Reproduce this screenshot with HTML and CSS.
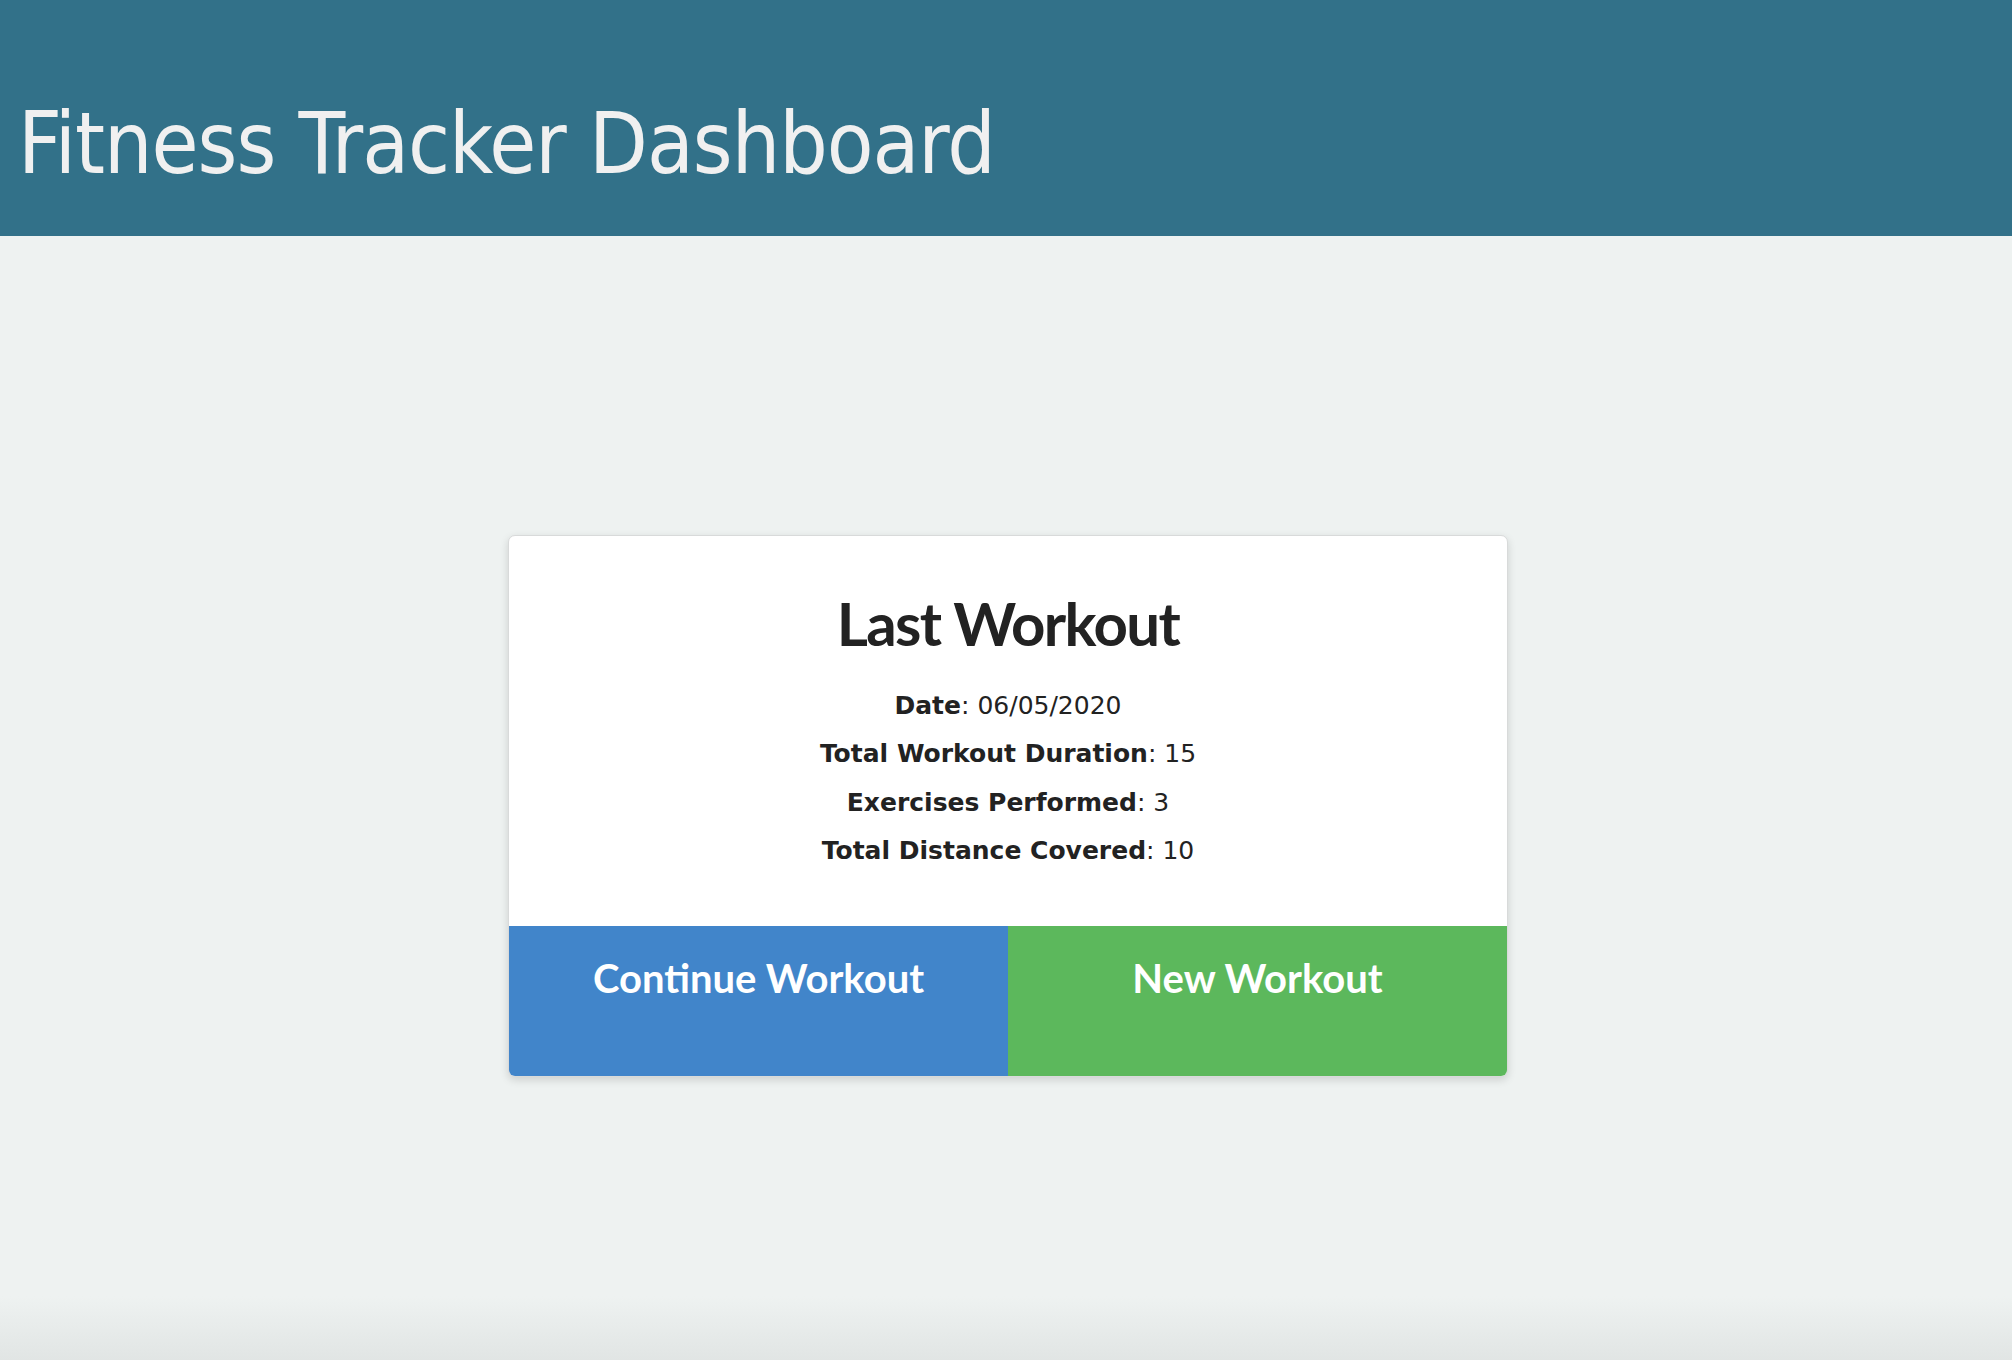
FILE: index.html
```html
<!DOCTYPE html>
<html lang="en">
<head>
<meta charset="utf-8">
<title>Fitness Tracker Dashboard</title>
<link rel="stylesheet" href="styles.css">
</head>
<body>
<header class="topbar">
  <h1 class="title">Fitness Tracker Dashboard</h1>
</header>
<main class="main">
  <section class="card">
    <div class="card-body">
      <h2 class="card-title">Last Workout</h2>
      <p class="stat"><strong>Date</strong>: 06/05/2020</p>
      <p class="stat"><strong>Total Workout Duration</strong>: 15</p>
      <p class="stat"><strong>Exercises Performed</strong>: 3</p>
      <p class="stat"><strong>Total Distance Covered</strong>: 10</p>
    </div>
    <div class="actions">
      <a class="btn btn-continue" href="#">Continue Workout</a>
      <a class="btn btn-new" href="#">New Workout</a>
    </div>
  </section>
</main>
</body>
</html>
```
FILE: styles.css
```css
* { box-sizing: border-box; }
html, body { margin: 0; padding: 0; }
body {
  min-height: 100vh;
  background: linear-gradient(to bottom, #eef2f1 0, #eef2f1 calc(100% - 64px), #e1e5e4 100%);
  font-family: "DejaVu Sans", sans-serif;
  color: #222;
}
.topbar {
  height: 236px;
  background: #327189;
  padding: 95px 0 0 18px;
}
.title {
  margin: 0;
  font-family: "DejaVu Sans Condensed", "DejaVu Sans", sans-serif;
  font-weight: normal;
  font-size: 85px;
  line-height: 1.164;
  color: #f0f0f0;
  letter-spacing: -1px;
}
.main {
  display: flex;
  justify-content: center;
  padding: 299px 0 0 4px;
}
.card {
  width: 1000px;
  background: #fff;
  border: 1px solid #d8dada;
  border-radius: 7px;
  box-shadow: 0 3px 8px rgba(0,0,0,0.14);
  overflow: hidden;
}
.card-body {
  padding: 51px 20px 51px;
  text-align: center;
}
.card-title {
  margin: 0 0 23px;
  font-family: Lato, sans-serif;
  font-weight: bold;
  font-size: 60px;
  line-height: 72px;
  letter-spacing: -1.6px;
  color: #222;
}
.stat {
  margin: 0;
  font-family: "DejaVu Sans", sans-serif;
  font-size: 25px;
  line-height: 48.3px;
  color: #222;
}
.stat strong { font-weight: bold; }
.actions {
  display: flex;
  height: 150px;
}
.btn {
  flex: 1 1 0;
  text-align: center;
  text-decoration: none;
  color: #fff;
  font-family: Lato, sans-serif;
  font-weight: bold;
  font-size: 40px;
  line-height: 48px;
  padding-top: 28px;
}
.btn-continue { background: #4185ca; }
.btn-new { background: #5cb85c; }
```
